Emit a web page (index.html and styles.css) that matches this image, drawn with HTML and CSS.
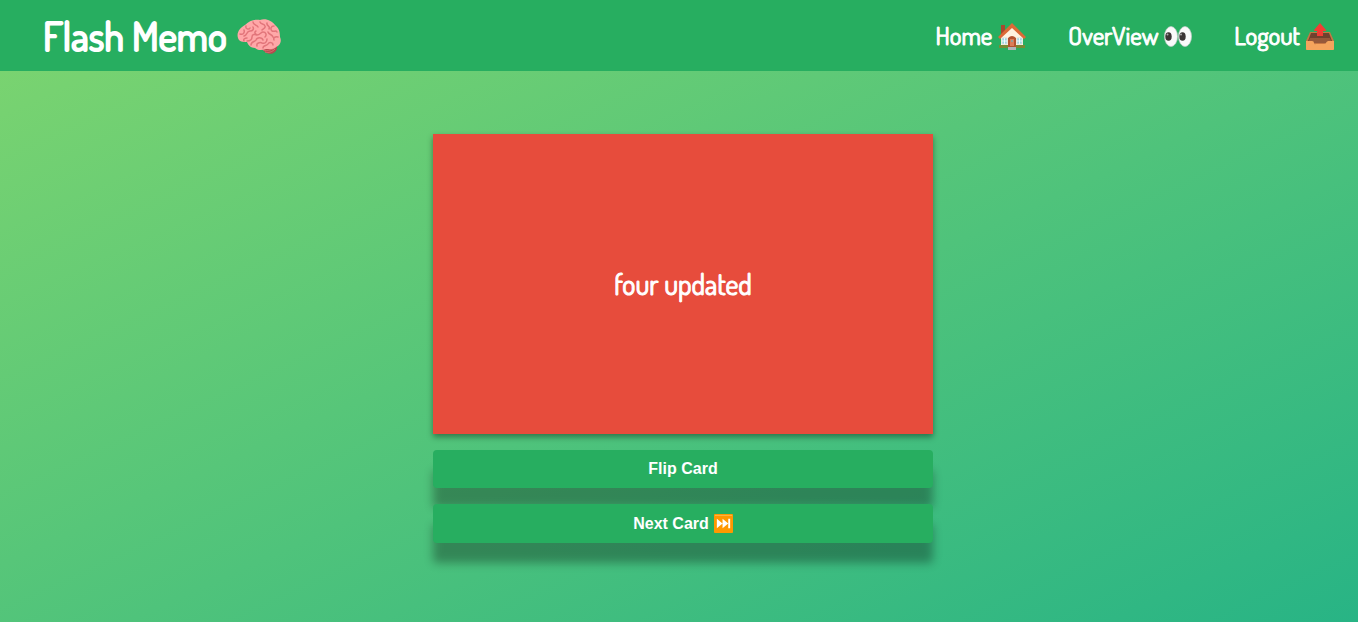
FILE: index.html
```html
<!DOCTYPE html>
<html lang="en">
<head>
<meta charset="utf-8">
<title>Flash Memo</title>
<link rel="stylesheet" href="styles.css">
</head>
<body>
<header class="nav">
  <h1 class="brand">Flash Memo
    <svg class="brain" viewBox="0 -2 44 36" aria-hidden="true">
      <path fill="#b9484d" d="M24 28c3 6 9 9 14 5 2-2 2-4 2-7z"/>
      <path stroke="#e07a78" stroke-width=".8" fill="none" d="M26 31c5 1 9 0 13-3M28 33c4 1 7 0 10-3"/>
      <path fill="#ffa7a8" d="M1 19C-1 13 4 8 8 6c4-4 10-6 15-5 6-2 12 1 15 5 4 3 5 7 5 12 2 4 0 9-4 10-3 3-7 2-10 2-5 2-9 1-11-1-4 0-7-3-8-6-4 0-8 0-9-4z"/>
      <g fill="none" stroke="#e2757a" stroke-width="1.5" stroke-linecap="round">
        <path d="M3 15c3 1 5-1 4-4M9 7c-1 3 3 4 4 2M7 17c4-1 2-5 6-5 3 0 4-2 3-4M16 3c0 3 4 3 5 5M23 3c1 3 4 1 5 4 1 2-2 3-3 4M10 22c3 0 5-1 5-4s3-3 5-2M19 12c-2 1-1 3 1 4 3 0 4-3 6-3 3 0 4 3 2 5M30 4c-1 3 4 3 2 6M37 7c-3 0-4 3-2 5 2 1 4-1 5 1M31 13c1 3 4 2 5 5M41 18c-3-1-5 1-4 3M14 26c0-4 4-3 5-5 1-3 6-3 7 0M20 27c-1-3 3-4 5-3 3 1 5-1 5-4M26 29c0-3 4-2 5-4 1-2 5-2 5 1M10 19c-2 0-4 1-3 3"/>
      </g>
    </svg>
  </h1>
  <nav class="links">
    <a class="link" href="#home">Home
      <svg class="icon" viewBox="0 -2 28 28" aria-hidden="true">
        <path fill="#a7492e" d="M3 2h4v10H3z"/>
        <path fill="#fff3e0" d="M14 4 3 14v10h22V14z"/>
        <path fill="#dc6a36" d="M14 0 0 14l2 2L14 5l12 11 2-2z"/>
        <path fill="#9bd8e7" stroke="#d5dedb" d="M4 15h5v6H4zM19 15h5v6h-5z"/>
        <path stroke="#fff" stroke-width=".8" d="M4 18h5M6.500 15v6M19 18h5M21.500 15v6"/>
        <path fill="#788b35" d="M1 22h9v3H1zM18 22h9v3h-9z"/>
        <path fill="#b4532f" d="M10 24V15q4-4 8 0v9z"/>
        <path fill="#db7d58" d="M12 16h4v7h-4z"/>
        <circle cx="14" cy="18" r="1" fill="#7fabad"/>
        <path fill="#b0b5b8" d="M10 24h8v3h-8z"/>
      </svg>
    </a>
    <a class="link" href="#overview">OverView
      <svg class="icon" viewBox="0 -1 28 28" aria-hidden="true">
        <g fill="#fafafa" stroke="#c4cbc8" stroke-width=".7"><ellipse cx="7" cy="14.500" rx="6.500" ry="10"/><ellipse cx="21" cy="14.500" rx="6.500" ry="10"/></g>
        <g fill="#3b3535"><ellipse cx="4.500" cy="14.500" rx="3.200" ry="4.300"/><ellipse cx="18.500" cy="14.500" rx="3.200" ry="4.300"/></g>
        <g fill="#aaa"><circle cx="3.500" cy="12.500" r="1"/><circle cx="17" cy="12.500" r="1"/></g>
      </svg>
    </a>
    <a class="link" href="#logout">Logout
      <svg class="icon" viewBox="0 -2 28 28" aria-hidden="true">
        <path fill="#c77743" d="M4 9h20l4 9v8q0 1-1 1H1q-1 0-1-1v-8z"/>
        <path fill="#70412e" d="M5 10h18l3 8H2z"/>
        <path fill="#96583a" d="M4 15h20l2 5H2z"/>
        <path fill="#f23c34" d="M14 0 8 7q-1 1 1 1h2v5h6V8h2q2 0 1-1z"/>
        <path fill="#f5a45d" d="M0 18h6q2 0 2 2t2 1h8q2 0 2-1t2-2h6v8q0 1-1 1H1q-1 0-1-1z"/>
      </svg>
    </a>
  </nav>
</header>
<main class="study">
  <section class="card"><p class="card-text">four updated</p></section>
  <button class="button" type="button">Flip Card</button>
  <button class="button" type="button">Next Card
    <svg class="next" viewBox="0 0 20 20" aria-hidden="true">
      <rect width="20" height="20" rx="1" fill="#ff9800"/>
      <path fill="#ffb547" d="M1 1h18v1H1z"/>
      <path fill="#fff" d="M3 5l6 5-6 5zM9 5l6 5-6 5zM15 5h2v10h-2z"/>
    </svg>
  </button>
</main>
</body>
</html>
```
FILE: styles.css
```css
* {
  box-sizing: border-box;
  margin: 0;
}

body {
  min-height: 100vh;
  color: #fff;
  font-family: Dosis, "Liberation Sans Narrow", "Liberation Sans", sans-serif;
  background: linear-gradient(to right bottom, #7ed56f, #28b485);
}

.nav {
  display: flex;
  align-items: center;
  justify-content: space-between;
  min-height: 71px;
  padding: 0 24px 2px 43px;
  background: #27ae60;
}

.brand,
.link,
.card-text {
  font-weight: 400;
  -webkit-text-stroke: 1px #fff;
}

.brand,
.link {
  display: flex;
  align-items: center;
}

.brand {
  gap: 10px;
  font-size: 40px;
  -webkit-text-stroke-width: 2px;
}

.links {
  display: flex;
  gap: 42px;
}

.link {
  gap: 6px;
  color: inherit;
  font-size: 25px;
  text-decoration: none;
}

.brain {
  width: 44px;
  height: 36px;
  overflow: visible;
}

.icon {
  width: 28px;
  height: 28px;
  overflow: visible;
}

.study {
  display: flex;
  flex-direction: column;
  align-items: center;
  gap: 16px;
  padding: 63px 0 24px 8px;
}

.card {
  display: grid;
  place-items: center;
  width: 100%;
  max-width: 500px;
  min-height: 300px;
  background: #e74c3c;
  box-shadow: 0 3px 6px rgba(0, 0, 0, 0.4);
}

.card-text {
  font-size: 28px;
}

.button {
  display: flex;
  align-items: center;
  justify-content: center;
  gap: 5px;
  width: 100%;
  max-width: 500px;
  padding: 10px;
  border: 0;
  border-radius: 4px;
  color: #fff;
  font: 700 16px/18px "Liberation Sans", Arial, sans-serif;
  background: #27ae60;
  box-shadow: 0 20px 10px rgba(0, 0, 0, 0.3);
}

.next {
  width: 19px;
  height: 19px;
}
```
